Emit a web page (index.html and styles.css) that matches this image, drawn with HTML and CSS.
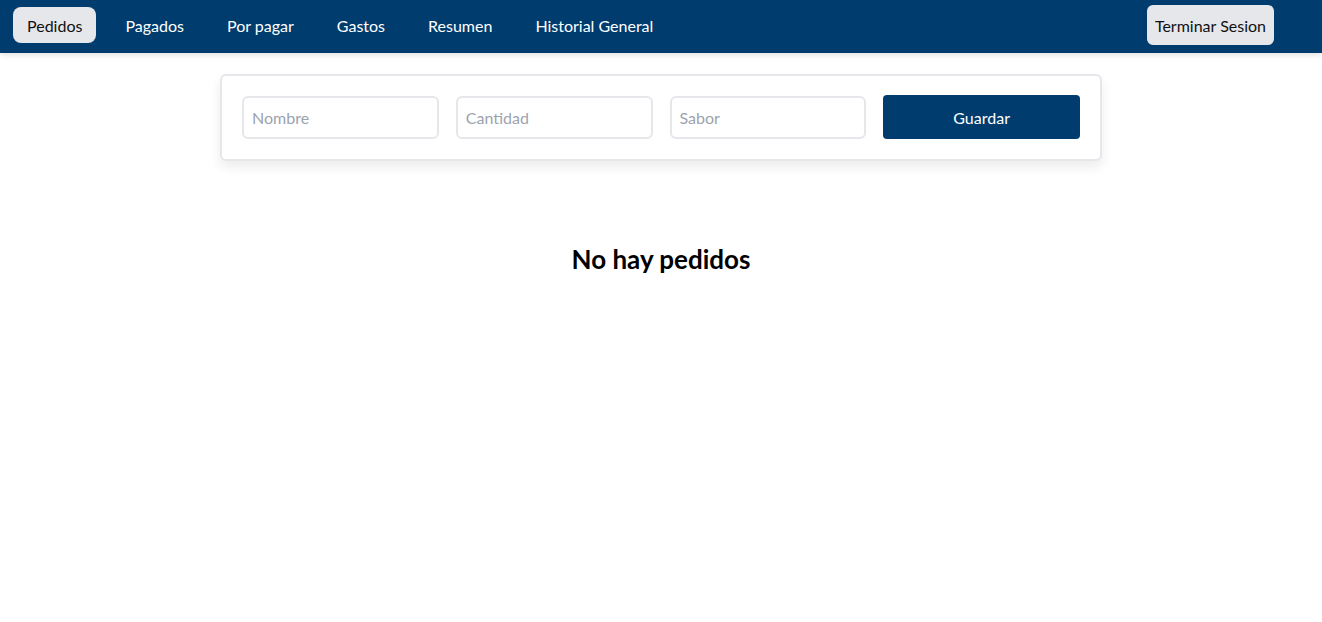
FILE: index.html
```html
<!DOCTYPE html>
<html lang="es">
<head>
<meta charset="utf-8">
<title>Pedidos</title>
<link rel="stylesheet" href="styles.css">
</head>
<body>
<header class="navbar">
  <nav class="nav-links">
    <a class="nav-item active">Pedidos</a>
    <a class="nav-item">Pagados</a>
    <a class="nav-item">Por pagar</a>
    <a class="nav-item">Gastos</a>
    <a class="nav-item">Resumen</a>
    <a class="nav-item">Historial General</a>
  </nav>
  <button class="logout">Terminar Sesion</button>
</header>
<main class="main">
  <form class="order-card">
    <input class="field" type="text" placeholder="Nombre">
    <input class="field" type="text" placeholder="Cantidad">
    <input class="field" type="text" placeholder="Sabor">
    <button class="save" type="button">Guardar</button>
  </form>
  <h2 class="empty">No hay pedidos</h2>
</main>
</body>
</html>
```
FILE: styles.css
```css
* { box-sizing: border-box; }
body {
  margin: 0;
  font-family: "Lato", "Liberation Sans", sans-serif;
  background: #fff;
  color: #000;
}
.navbar {
  height: 53px;
  background: #003c6e;
  display: flex;
  align-items: center;
  justify-content: space-between;
  padding: 0 48px 3px 13px;
  box-shadow: 0 2px 6px rgba(0,0,0,0.12);
}
.nav-links {
  display: flex;
  gap: 15px;
  align-items: center;
}
.nav-item {
  display: flex;
  align-items: center;
  height: 36px;
  padding: 0 14px;
  color: #fff;
  font-size: 16px;
  border-radius: 8px;
  cursor: pointer;
}
.nav-item.active {
  background: #e5e7eb;
  color: #111;
}
.logout {
  height: 40px;
  padding: 0 8px;
  background: #e5e7eb;
  color: #111;
  border: none;
  border-radius: 6px;
  font-family: inherit;
  font-size: 16px;
}
.main {
  display: flex;
  flex-direction: column;
  align-items: center;
  padding-top: 21px;
}
.order-card {
  width: 882px;
  display: grid;
  grid-template-columns: repeat(4, minmax(0, 1fr));
  gap: 17px;
  padding: 20px;
  border: 2px solid #e5e7eb;
  border-radius: 6px;
  box-shadow: 0 6px 12px rgba(0,0,0,0.08);
  background: #fff;
}
.field {
  width: 100%;
  min-width: 0;
  height: 43px;
  border: 2px solid #e5e7eb;
  border-radius: 6px;
  padding: 0 8px;
  font-family: inherit;
  font-size: 16px;
  color: #111;
  outline: none;
}
.field::placeholder { color: #9ca3af; }
.save {
  width: 100%;
  height: 44px;
  margin-top: -1px;
  background: #003c6e;
  color: #fff;
  border: none;
  border-radius: 4px;
  font-family: inherit;
  font-size: 16px;
}
.empty {
  margin: 82px 0 0;
  font-size: 26px;
  font-weight: 700;
}
```
